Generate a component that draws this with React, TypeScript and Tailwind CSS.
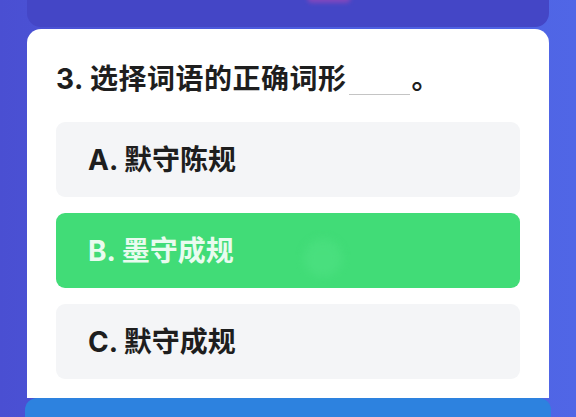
import React from "react";

const OPTIONS = [
  { key: "A", text: "默守陈规", active: false },
  { key: "B", text: "墨守成规", active: true },
  { key: "C", text: "默守成规", active: false },
];

const FONT = "font-['Inter','Noto_Sans_CJK_SC',sans-serif]";

export default function App() {
  return (
    <div className="relative h-[417px] w-full overflow-hidden bg-gradient-to-r from-[#4a4fd2] via-[#4c5ddf] to-[#5066e6]">
      <div className="flex flex-col px-[25px]">
        {/* header panel peeking in at the top */}
        <div className="relative mx-[2px] h-[27px] rounded-b-[14px] bg-[#4446c6]">
          <div className="absolute left-[280px] top-[-8px] h-[11px] w-[44px] rounded-full bg-[#9a48b9] opacity-70 blur-[2px]" />
        </div>

        <div className={`mx-[2px] mt-[2px] flex h-[369px] flex-col rounded-t-[14px] bg-white px-[29px] pt-[30px] ${FONT}`}>
          <h2 className="text-[28px] font-bold leading-[36px] tracking-[0.5px] text-[#1e1e1e]">
            3. 选择词语的正确词形
            <span className="mx-[2px] inline-block h-[30px] w-[61px] translate-y-[6px] border-b border-[#c4c4c4] align-baseline" />
            。
          </h2>

          <div className="mt-[25px] flex flex-col gap-[16px]">
            {OPTIONS.map((o) => (
              <div
                key={o.key}
                className={`relative flex h-[75px] items-center overflow-hidden rounded-[9px] pl-[32px] ${
                  o.active ? "bg-[#41dc77]" : "bg-[#f4f5f7]"
                }`}
              >
                <span
                  className={`text-[28px] font-bold leading-none ${
                    o.active ? "text-[#e9fbef]" : "text-[#1e1e1e]"
                  }`}
                >
                  {o.key}. {o.text}
                </span>
                {o.active && (
                  <span className="absolute left-[248px] top-[26px] h-[38px] w-[38px] rounded-full bg-[#4fe183] opacity-60 blur-[4px]" />
                )}
              </div>
            ))}
          </div>
        </div>

        <div className="h-[30px] rounded-t-[12px] bg-[#2d82df]" />
      </div>
    </div>
  );
}
